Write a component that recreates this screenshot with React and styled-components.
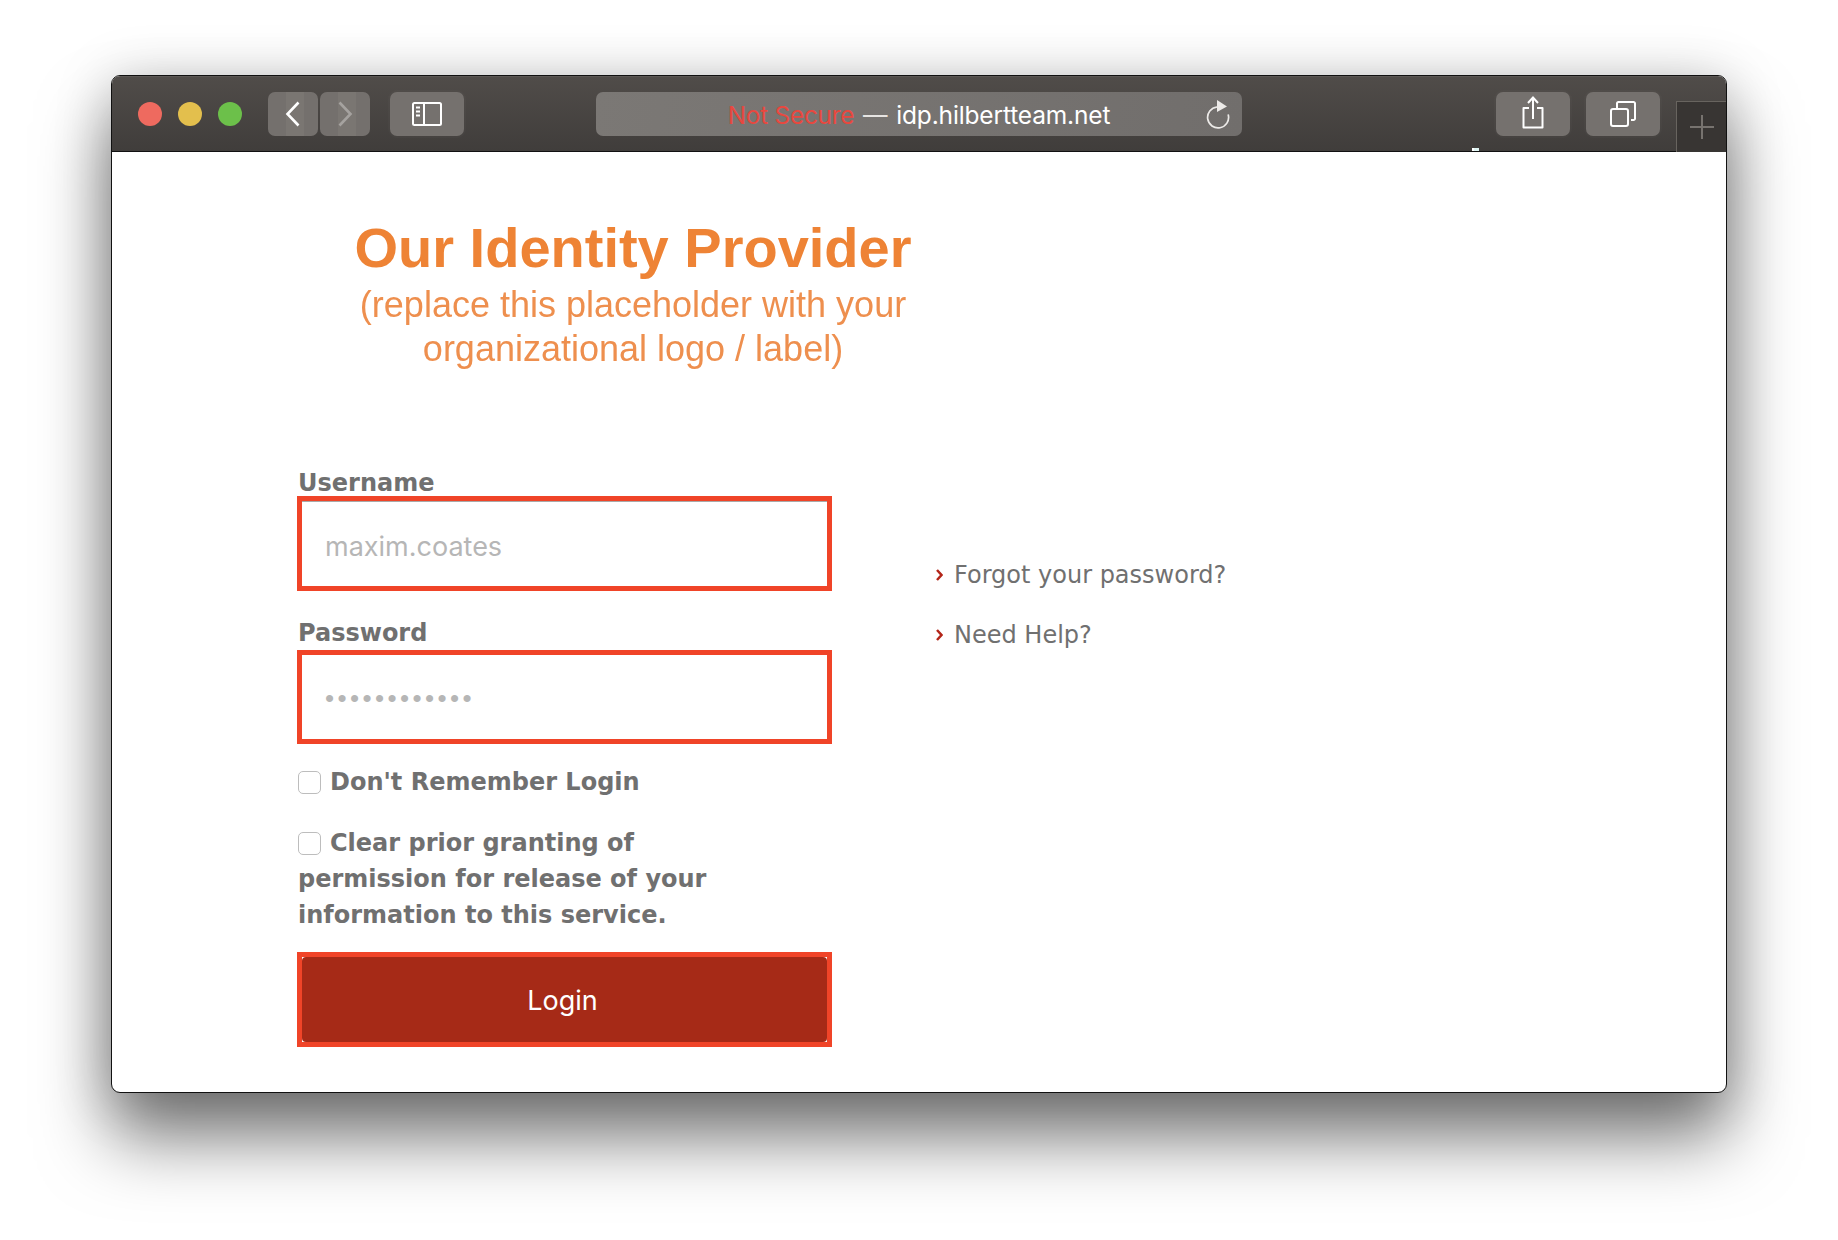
import React from "react";
import styled, { createGlobalStyle } from "styled-components";

const Global = createGlobalStyle`
  html, body { margin: 0; padding: 0; background: #fff; }
  body { width: 1838px; height: 1240px; overflow: hidden; font-family: "DejaVu Sans", sans-serif; }
  * { box-sizing: border-box; }
`;

const Stage = styled.div`
  width: 1838px;
  height: 1240px;
  padding: 75px 111px 0;
`;

const Win = styled.div`
  width: 1616px;
  height: 1018px;
  border-radius: 9px;
  background: #fff;
  border: 1px solid #111;
  box-shadow: 0 46px 70px rgba(0, 0, 0, 0.5), 0 6px 56px rgba(0, 0, 0, 0.22);
  overflow: hidden;
  display: flex;
  flex-direction: column;
`;

const Toolbar = styled.div`
  position: relative;
  height: 76px;
  flex: none;
  display: flex;
  align-items: flex-start;
  padding: 15px 0 0 26px;
  background: linear-gradient(#504c49, #403d3b);
  border-top: 1px solid #5c5855;
  border-bottom: 1px solid #111;
`;

const Lights = styled.div`
  display: flex;
  gap: 16px;
  margin: 10px 0 0 0;
`;

const Light = styled.span`
  width: 24px;
  height: 24px;
  border-radius: 50%;
  background: ${(p) => p.$c};
`;

const NavGroup = styled.div`
  display: flex;
  gap: 2px;
  margin-left: 26px;
`;

const NavButton = styled.div`
  width: 50px;
  height: 44px;
  border-radius: 7px;
  display: flex;
  align-items: center;
  justify-content: center;
  background: linear-gradient(90deg, #74706d 0 36%, #7a7672 36% 72%, #74706d 72%);
`;

const ToolButton = styled.div`
  width: 74px;
  height: 44px;
  border-radius: 7px;
  background: #75716e;
  display: flex;
  align-items: center;
  justify-content: center;
  margin-left: ${(p) => p.$ml || 0}px;
  box-shadow: 0 0 0 2px rgba(255, 255, 255, 0.02);
`;

const UrlBar = styled.div`
  width: 646px;
  height: 44px;
  margin-left: 132px;
  border-radius: 7px;
  background: linear-gradient(100deg, #7b7875, #716e6c);
  display: grid;
  grid-template-columns: 1fr auto 1fr;
  align-items: center;
  font-family: Inter, "Liberation Sans", sans-serif;
  font-size: 24.5px;
  letter-spacing: -0.15px;
  color: #fff;
`;

const UrlText = styled.div`
  grid-column: 2;
  white-space: nowrap;
  padding-top: 1px;
`;

const NotSecure = styled.span`
  color: #e8483f;
  letter-spacing: -0.3px;
`;

const Dash = styled.span`
  color: #e6e4e2;
  margin: 0 2px;
`;

const Reload = styled.div`
  grid-column: 3;
  justify-self: end;
  margin-right: 12px;
  display: flex;
`;

const NewTab = styled.div`
  width: 50px;
  height: 51px;
  margin: 9px 0 0 16px;
  flex: none;
  background: #383533;
  border-left: 1px solid #68645f;
  border-top: 1px solid #68645f;
  display: flex;
  align-items: center;
  justify-content: center;
`;

const Speck = styled.span`
  position: absolute;
  left: 1360px;
  bottom: 0;
  width: 7px;
  height: 3px;
  background: #dff5f3;
  border-left: 2px solid #fff;
`;

const Content = styled.div`
  flex: 1;
  padding: 0 0 0 185px;
  display: flex;
  flex-direction: column;
`;

const Logo = styled.div`
  width: 672px;
  margin-top: 69px;
  text-align: center;
  font-family: "Liberation Sans", Arial, sans-serif;
  color: #ee8f4e;
  filter: blur(0.7px);
`;

const LogoTitle = styled.div`
  font-size: 56px;
  line-height: 54px;
  font-weight: 700;
  color: #ee8335;
`;

const LogoSub = styled.div`
  font-size: 36px;
  line-height: 44px;
  margin-top: 8px;
`;

const Columns = styled.div`
  display: flex;
  margin-top: 98px;
`;

const Form = styled.form`
  width: 535px;
  flex: none;
  display: flex;
  flex-direction: column;
`;

const FieldLabel = styled.label`
  display: block;
  height: ${(p) => p.$h}px;
  font-size: 24px;
  line-height: 28px;
  font-weight: 700;
  color: #707070;
  padding-left: 1px;
`;

const Input = styled.input`
  display: block;
  width: 535px;
  height: ${(p) => p.$h}px;
  margin-bottom: ${(p) => p.$mb}px;
  border: 5px solid #f04428;
  border-radius: 0;
  outline: none;
  background: #fff;
  padding: ${(p) => (p.$dots ? "2px 0 0 23px" : "6px 0 0 23px")};
  font-family: ${(p) => (p.$dots ? '"Liberation Sans"' : 'Inter')}, sans-serif;
  font-size: ${(p) => (p.$dots ? 26 : 27)}px;
  letter-spacing: ${(p) => (p.$dots ? 3.4 : 0)}px;
  box-shadow: ${(p) => (p.$dots ? "none" : "inset 0 1px 0 #a9a9a9")};
  &::placeholder { color: #b6b6b6; opacity: 1; }
`;

const CheckRow = styled.div`
  font-size: 24px;
  line-height: 36px;
  font-weight: 700;
  color: #707070;
  margin-bottom: ${(p) => p.$mb}px;
  padding-left: 1px;
`;

const Box = styled.input.attrs({ type: "checkbox" })`
  appearance: none;
  width: 23px;
  height: 23px;
  margin: 0 9px 0 0;
  border: 1px solid #bdbdbd;
  border-radius: 5px;
  background: #fff;
  vertical-align: -4px;
`;

const LoginFrame = styled.div`
  width: 535px;
  height: 95px;
  border: 5px solid #f04428;
  background: #fff;
  margin-top: 19px;
`;

const LoginButton = styled.button`
  display: block;
  width: 100%;
  height: 100%;
  border: 0;
  border-radius: 4px;
  background: #a62a17;
  color: #fff;
  font-family: Inter, "Liberation Sans", sans-serif;
  font-size: 27px;
  padding: 2px 4px 0 0;
`;

const Links = styled.div`
  margin: 92px 0 0 104px;
  display: flex;
  flex-direction: column;
  gap: 32px;
`;

const LinkRow = styled.a`
  display: flex;
  align-items: center;
  gap: 11px;
  height: 28px;
  font-size: 24px;
  line-height: 28px;
  color: #707070;
`;

const Chevron = () => (
  <svg width="7" height="12" viewBox="0 0 7 12" fill="none">
    <path d="M1 1l4.5 5L1 11" stroke="#b3261a" strokeWidth="2.5" />
  </svg>
);

const W = "#fff";

export default function App() {
  return (
    <Stage>
      <Global />
      <Win>
        <Toolbar>
          <Lights>
            <Light $c="#ee6a5f" />
            <Light $c="#e3bf4d" />
            <Light $c="#6cc04a" />
          </Lights>
          <NavGroup>
            <NavButton>
              <svg width="16" height="26" viewBox="0 0 16 26" fill="none">
                <path d="M13.5 1.5L2.5 13l11 11.5" stroke={W} strokeWidth="2.6" />
              </svg>
            </NavButton>
            <NavButton>
              <svg width="16" height="26" viewBox="0 0 16 26" fill="none">
                <path d="M2.5 1.5L13.5 13l-11 11.5" stroke="#a5a29f" strokeWidth="2.6" />
              </svg>
            </NavButton>
          </NavGroup>
          <ToolButton $ml={20}>
            <svg width="30" height="24" viewBox="0 0 30 24" fill="none">
              <rect x="1" y="1" width="28" height="22" rx="1.5" stroke={W} strokeWidth="2" />
              <path d="M12 1v22" stroke={W} strokeWidth="2" />
              <path d="M4 5.5h4M4 9.5h4M4 13.5h4" stroke={W} strokeWidth="1.8" />
            </svg>
          </ToolButton>
          <UrlBar>
            <UrlText>
              <NotSecure>Not Secure</NotSecure> <Dash>—</Dash> idp.hilbertteam.net
            </UrlText>
            <Reload>
              <svg width="24" height="30" viewBox="0 0 24 30" fill="none">
                <path d="M11 8A10.5 10.5 0 1 0 22.3 16" stroke="#eceae8" strokeWidth="1.7" strokeLinecap="round" />
                <path d="M11 1L21 7.5L11 13z" fill="#eceae8" />
              </svg>
            </Reload>
          </UrlBar>
          <ToolButton $ml={254}>
            <svg width="24" height="36" viewBox="0 0 24 36" fill="none">
              <path d="M8 12H2.5v19.5h19V12H16" stroke={W} strokeWidth="2" strokeLinejoin="round" />
              <path d="M12 23V2M7 7l5-5.5L17 7" stroke={W} strokeWidth="2" />
            </svg>
          </ToolButton>
          <ToolButton $ml={16}>
            <svg width="26" height="26" viewBox="0 0 26 26" fill="none">
              <rect x="1" y="8" width="17" height="17" rx="2" stroke={W} strokeWidth="2" />
              <path d="M7 8V2.5A1.5 1.5 0 0 1 8.5 1H23.5A1.5 1.5 0 0 1 25 2.5V17.5A1.5 1.5 0 0 1 23.5 19H21" stroke={W} strokeWidth="2" />
            </svg>
          </ToolButton>
          <NewTab>
            <svg width="24" height="24" viewBox="0 0 24 24" fill="none">
              <path d="M12 0v24M0 12h24" stroke="#77736f" strokeWidth="2" />
            </svg>
          </NewTab>
          <Speck />
        </Toolbar>
        <Content>
          <Logo>
            <LogoTitle>Our Identity Provider</LogoTitle>
            <LogoSub>
              (replace this placeholder with your
              <br />
              organizational logo / label)
            </LogoSub>
          </Logo>
          <Columns>
            <Form>
              <FieldLabel $h={27}>Username</FieldLabel>
              <Input $h={95} $mb={28} placeholder="maxim.coates" />
              <FieldLabel $h={31}>Password</FieldLabel>
              <Input $h={94} $mb={20} $dots placeholder="••••••••••••" />
              <CheckRow $mb={25}>
                <Box />
                Don't Remember Login
              </CheckRow>
              <CheckRow $mb={0}>
                <Box />
                Clear prior granting of
                <br />
                permission for release of your
                <br />
                information to this service.
              </CheckRow>
              <LoginFrame>
                <LoginButton type="button">Login</LoginButton>
              </LoginFrame>
            </Form>
            <Links>
              <LinkRow>
                <Chevron />
                Forgot your password?
              </LinkRow>
              <LinkRow>
                <Chevron />
                Need Help?
              </LinkRow>
            </Links>
          </Columns>
        </Content>
      </Win>
    </Stage>
  );
}
